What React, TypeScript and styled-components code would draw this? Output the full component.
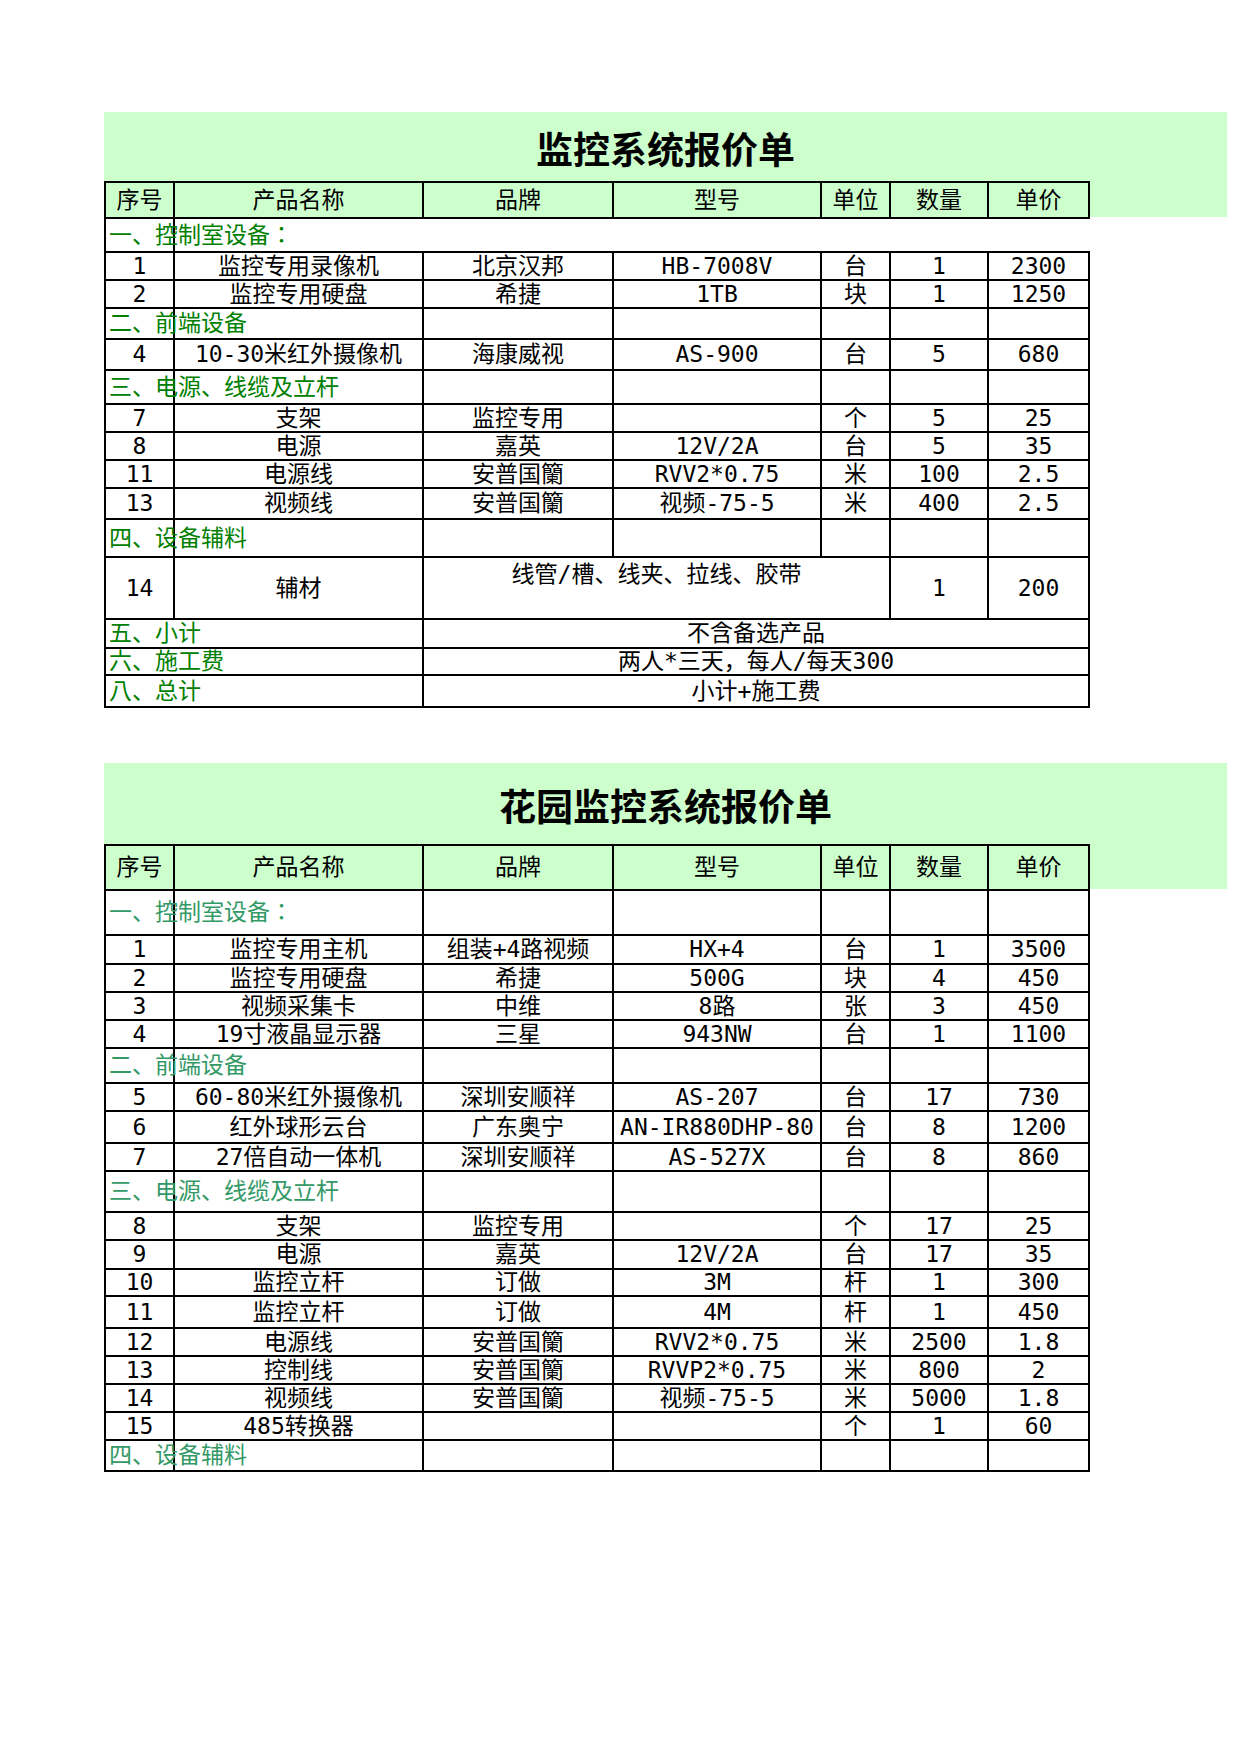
import styled, { createGlobalStyle } from "styled-components";

type Row =
  | { kind: "head"; h: number }
  | { kind: "section"; h: number; label: string; bare?: boolean }
  | { kind: "item"; h: number; cells: string[] }
  | { kind: "misc"; h: number; cells: string[]; note: string }
  | { kind: "total"; h: number; label: string; note: string };

type SheetData = {
  title: string;
  titleH: number;
  labelColor: string;
  rows: Row[];
};

const HEAD = ["序号", "产品名称", "品牌", "型号", "单位", "数量", "单价"];
const COLS = [69, 249, 190, 208, 69, 98, 101];

const sheets: SheetData[] = [
  {
    title: "监控系统报价单",
    titleH: 69,
    labelColor: "#008000",
    rows: [
      { kind: "head", h: 36 },
      { kind: "section", h: 34, label: "一、控制室设备：", bare: true },
      { kind: "item", h: 28, cells: ["1", "监控专用录像机", "北京汉邦", "HB-7008V", "台", "1", "2300"] },
      { kind: "item", h: 28, cells: ["2", "监控专用硬盘", "希捷", "1TB", "块", "1", "1250"] },
      { kind: "section", h: 31, label: "二、前端设备" },
      { kind: "item", h: 31, cells: ["4", "10-30米红外摄像机", "海康威视", "AS-900", "台", "5", "680"] },
      { kind: "section", h: 34, label: "三、电源、线缆及立杆" },
      { kind: "item", h: 28, cells: ["7", "支架", "监控专用", "", "个", "5", "25"] },
      { kind: "item", h: 28, cells: ["8", "电源", "嘉英", "12V/2A", "台", "5", "35"] },
      { kind: "item", h: 28, cells: ["11", "电源线", "安普国籣", "RVV2*0.75", "米", "100", "2.5"] },
      { kind: "item", h: 31, cells: ["13", "视频线", "安普国籣", "视频-75-5", "米", "400", "2.5"] },
      { kind: "section", h: 38, label: "四、设备辅料" },
      { kind: "misc", h: 62, cells: ["14", "辅材", "1", "200"], note: "线管/槽、线夹、拉线、胶带" },
      { kind: "total", h: 29, label: "五、小计", note: "不含备选产品" },
      { kind: "total", h: 27, label: "六、施工费", note: "两人*三天，每人/每天300" },
      { kind: "total", h: 32, label: "八、总计", note: "小计+施工费" },
    ],
  },
  {
    title: "花园监控系统报价单",
    titleH: 81,
    labelColor: "#339966",
    rows: [
      { kind: "head", h: 45 },
      { kind: "section", h: 45, label: "一、控制室设备：" },
      { kind: "item", h: 29, cells: ["1", "监控专用主机", "组装+4路视频", "HX+4", "台", "1", "3500"] },
      { kind: "item", h: 28, cells: ["2", "监控专用硬盘", "希捷", "500G", "块", "4", "450"] },
      { kind: "item", h: 28, cells: ["3", "视频采集卡", "中维", "8路", "张", "3", "450"] },
      { kind: "item", h: 28, cells: ["4", "19寸液晶显示器", "三星", "943NW", "台", "1", "1100"] },
      { kind: "section", h: 35, label: "二、前端设备" },
      { kind: "item", h: 28, cells: ["5", "60-80米红外摄像机", "深圳安顺祥", "AS-207", "台", "17", "730"] },
      { kind: "item", h: 32, cells: ["6", "红外球形云台", "广东奥宁", "AN-IR880DHP-80", "台", "8", "1200"] },
      { kind: "item", h: 28, cells: ["7", "27倍自动一体机", "深圳安顺祥", "AS-527X", "台", "8", "860"] },
      { kind: "section", h: 41, label: "三、电源、线缆及立杆" },
      { kind: "item", h: 28, cells: ["8", "支架", "监控专用", "", "个", "17", "25"] },
      { kind: "item", h: 29, cells: ["9", "电源", "嘉英", "12V/2A", "台", "17", "35"] },
      { kind: "item", h: 27, cells: ["10", "监控立杆", "订做", "3M", "杆", "1", "300"] },
      { kind: "item", h: 32, cells: ["11", "监控立杆", "订做", "4M", "杆", "1", "450"] },
      { kind: "item", h: 28, cells: ["12", "电源线", "安普国籣", "RVV2*0.75", "米", "2500", "1.8"] },
      { kind: "item", h: 28, cells: ["13", "控制线", "安普国籣", "RVVP2*0.75", "米", "800", "2"] },
      { kind: "item", h: 28, cells: ["14", "视频线", "安普国籣", "视频-75-5", "米", "5000", "1.8"] },
      { kind: "item", h: 28, cells: ["15", "485转换器", "", "", "个", "1", "60"] },
      { kind: "section", h: 31, label: "四、设备辅料" },
    ],
  },
];

// punctuation (、：，) sits like the JP cut of Noto in the sheet
const PUNCT_FONT = `"DejaVu Sans Mono", "Noto Sans CJK JP", monospace`;

const GlobalStyle = createGlobalStyle`
  body {
    margin: 0;
    background: #fff;
  }
`;

const Page = styled.div`
  box-sizing: border-box;
  min-height: 1754px;
  padding: 112px 0 0 104px;
  display: flex;
  flex-direction: column;
  gap: 55px;
`;

const Sheet = styled.section<{ $band: number }>`
  width: 1123px;
  background: linear-gradient(#ccffcc, #ccffcc) 0 0 / 100% ${(p) => p.$band}px no-repeat;
`;

const Title = styled.h1<{ $h: number }>`
  margin: 0;
  height: ${(p) => p.$h}px;
  display: flex;
  align-items: center;
  justify-content: center;
  padding-top: 3px;
  box-sizing: border-box;
  font: 700 37px "Noto Sans CJK SC", sans-serif;
  color: #000;
`;

const Grid = styled.table`
  border-collapse: collapse;
  table-layout: fixed;
  width: 984px;
  font-family: "DejaVu Sans Mono", "Noto Sans CJK SC", monospace;
  font-size: 23px;
  line-height: 1;
  color: #000;
`;

const Tr = styled.tr<{ $h: number }>`
  height: ${(p) => p.$h}px;
`;

const Cell = styled.td<{ $bare?: boolean; $top?: boolean; $punct?: boolean }>`
  border: ${(p) => (p.$bare ? "none" : "2px solid #000")};
  padding: ${(p) => (p.$top ? "5px 0 0" : "0")};
  text-align: center;
  vertical-align: ${(p) => (p.$top ? "top" : "middle")};
  white-space: nowrap;
  font-family: ${(p) => (p.$punct ? PUNCT_FONT : "inherit")};
`;

const HeadCell = styled.th`
  border: 2px solid #000;
  padding: 0;
  background: #ccffcc;
  font-weight: 400;
  text-align: center;
  vertical-align: middle;
`;

const Label = styled.td<{ $color: string }>`
  border: 2px solid #000;
  padding: 0 0 0 3px;
  text-align: left;
  vertical-align: middle;
  white-space: nowrap;
  overflow: visible;
  font-family: ${PUNCT_FONT};
  color: ${(p) => p.$color};
`;

const renderRow = (row: Row, color: string, i: number) => {
  switch (row.kind) {
    case "head":
      return (
        <Tr key={i} $h={row.h}>
          {HEAD.map((t) => (
            <HeadCell key={t}>{t}</HeadCell>
          ))}
        </Tr>
      );
    case "section":
      return (
        <Tr key={i} $h={row.h}>
          <Label $color={color}>{row.label}</Label>
          {[0, 1, 2, 3, 4, 5].map((k) => (
            <Cell key={k} $bare={row.bare} />
          ))}
        </Tr>
      );
    case "item":
      return (
        <Tr key={i} $h={row.h}>
          {row.cells.map((t, k) => (
            <Cell key={k}>{t}</Cell>
          ))}
        </Tr>
      );
    case "misc":
      return (
        <Tr key={i} $h={row.h}>
          <Cell>{row.cells[0]}</Cell>
          <Cell>{row.cells[1]}</Cell>
          <Cell colSpan={3} $top $punct>
            {row.note}
          </Cell>
          <Cell>{row.cells[2]}</Cell>
          <Cell>{row.cells[3]}</Cell>
        </Tr>
      );
    case "total":
      return (
        <Tr key={i} $h={row.h}>
          <Label $color={color} colSpan={2}>
            {row.label}
          </Label>
          <Cell colSpan={5} $punct>
            {row.note}
          </Cell>
        </Tr>
      );
  }
};

const App = () => {
  return (
    <>
      <GlobalStyle />
      <Page>
        {sheets.map((s) => (
          <Sheet key={s.title} $band={s.titleH + s.rows[0].h}>
            <Title $h={s.titleH}>{s.title}</Title>
            <Grid>
              <colgroup>
                {COLS.map((w, k) => (
                  <col key={k} style={{ width: w }} />
                ))}
              </colgroup>
              <tbody>{s.rows.map((r, i) => renderRow(r, s.labelColor, i))}</tbody>
            </Grid>
          </Sheet>
        ))}
      </Page>
    </>
  );
};

export default App;
